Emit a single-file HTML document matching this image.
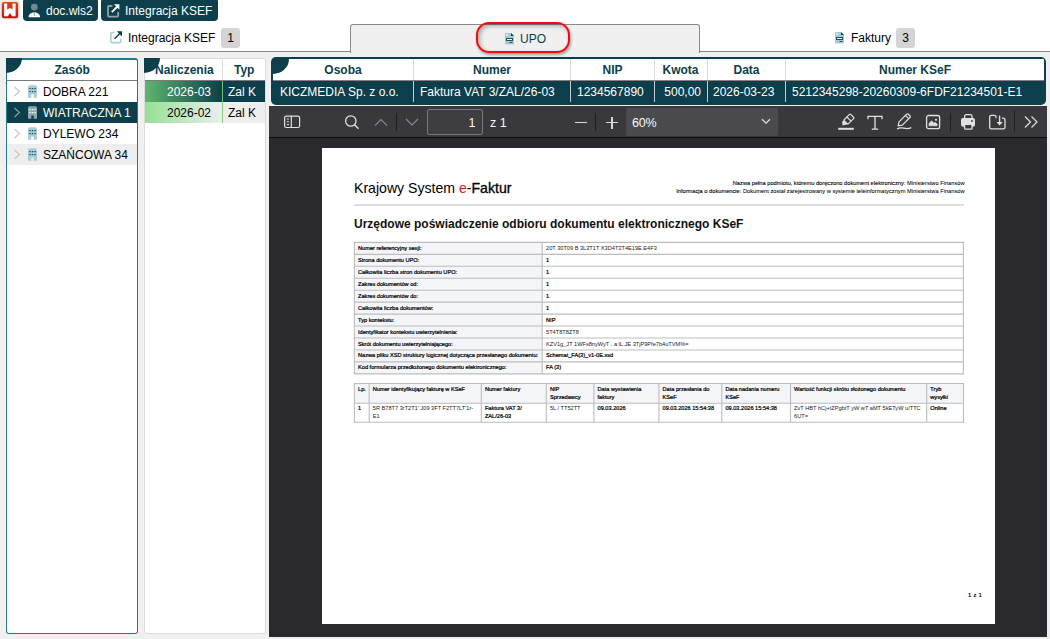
<!DOCTYPE html>
<html><head><meta charset="utf-8">
<style>
*{box-sizing:border-box;margin:0;padding:0}
html,body{width:1050px;height:639px;overflow:hidden}
body{position:relative;background:#f0f0f0;font-family:"Liberation Sans",sans-serif;font-size:12px;color:#000}
.abs{position:absolute}
#top{position:absolute;left:0;top:0;width:1050px;height:52px;background:#fff}
.btn{position:absolute;top:-2px;height:23px;background:#0c3f4b;border-radius:4px;color:#fff;font-size:12px;line-height:25px}
.tabline{position:absolute;top:51px;height:1px;background:#888}
.tab{position:absolute;top:24px;height:29px;background:#f0f0f0;border:1px solid #888;border-bottom:none;border-radius:3px 3px 0 0;width:350px;left:350px}
.badge{position:absolute;top:28px;width:19px;height:20px;background:#d4d4d4;border-radius:3px;text-align:center;line-height:20px;font-size:12px;color:#000}
.panel{position:absolute;background:#fff}
.qc{position:absolute;width:16px;height:15px;background:#0c3f4b;border-bottom-right-radius:16px 15px}
.hdr{position:absolute;font-weight:bold;color:#0c3f4b;font-size:12px}
</style></head><body>
<div id="top">
  <!-- logo -->
  <div class="abs" style="left:0;top:0;width:20px;height:20px;border-radius:3px;background:#e6ecef"></div>
  <svg class="abs" style="left:0;top:0" width="20" height="20" viewBox="0 0 20 20"><defs><linearGradient id="lg" x1="0" y1="0" x2="0" y2="1"><stop offset="0" stop-color="#e2470f"/><stop offset="1" stop-color="#c80f0a"/></linearGradient></defs><rect x="1.8" y="1.9" width="16.4" height="16.3" rx="2.2" fill="url(#lg)"/><path d="M4.1 3.4H7.2V9.5L10 8L12.5 9.5V3.4H15.6V16.3H12.1L10 13.1L7.9 16.3H4.1Z" fill="#fff"/></svg>
  <div class="btn" style="left:23px;width:75px"></div>
  <div class="btn" style="left:101px;width:117px"></div>
  <svg class="abs" style="left:106px;top:3px" width="15" height="15" viewBox="0 0 15 15"><path d="M6.5 3H3Q2 3 2 4V12.6Q2 13.6 3 13.6H11.2Q12.2 13.6 12.2 12.6V9" fill="none" stroke="#8ea3a8" stroke-width="1.8"/><path d="M5.8 9.2L12 3" stroke="#fff" stroke-width="1.9"/><path d="M8 1.3H13.4V6.7Z" fill="#fff"/></svg>
<svg class="abs" style="left:27px;top:2px" width="15" height="17" viewBox="0 0 15 17"><circle cx="7.3" cy="5.1" r="3.4" fill="#6f8a90"/><path d="M1.5 15.2Q1.8 10.6 7.3 10.3Q12.8 10.6 13.1 15.2Z" fill="#fff"/><path d="M7.3 10.5V14" stroke="#6f8a90" stroke-width="0.8"/></svg>
<div class="abs" style="left:46px;top:3px;color:#fff;line-height:16px">doc.wls2</div>
  <div class="abs" style="left:125px;top:3px;color:#fff;line-height:16px">Integracja KSEF</div>
  <div class="tabline" style="left:0;width:351px"></div>
  <div class="tabline" style="left:699px;width:351px"></div>
  <div class="tab"></div>
  <svg class="abs" style="left:109px;top:30px" width="15" height="15" viewBox="0 0 15 15"><path d="M5.5 2.5H2.8Q1.8 2.5 1.8 3.5V11.6Q1.8 12.6 2.8 12.6H10.8Q11.8 12.6 11.8 11.6V8.8" fill="none" stroke="#a6d0dc" stroke-width="1.6"/><path d="M5.6 8.8L11.6 2.8" stroke="#0c3f4b" stroke-width="1.35"/><path d="M7.8 1.2H13V6.4Z" fill="#0c3f4b"/></svg>
<div class="abs" style="left:128px;top:30px;line-height:16px">Integracja KSEF</div>
  <div class="badge" style="left:221px">1</div>
  <div class="abs" style="left:476px;top:22px;width:94px;height:31px;border:2px solid #f40a0a;border-radius:13px;box-shadow:1px 2px 3px rgba(0,0,0,.35), inset 2px 2px 4px rgba(0,0,0,.3)"></div>
<svg class="abs" style="left:505px;top:33px" width="10" height="12" viewBox="0 0 10 12"><path d="M0 0H6L9 3V11.5H0Z" fill="#a3ccd5"/><path d="M6 0V3H9Z" fill="#123f4c"/><rect x="1" y="1" width="2" height="2" fill="#d6ecf0"/><rect x="1" y="5" width="7" height="3" fill="#1f4f5e"/><rect x="2" y="6" width="5" height="1" fill="#fff"/><rect x="4.5" y="9" width="3" height="1" fill="#1f4f5e"/></svg>
<div class="abs" style="left:520px;top:31px;line-height:16px;color:#0c3f4b">UPO</div>
  <svg class="abs" style="left:835px;top:32px" width="10" height="12" viewBox="0 0 10 12"><path d="M0 0H6L9 3V11.5H0Z" fill="#a3ccd5"/><path d="M6 0V3H9Z" fill="#123f4c"/><rect x="1" y="1" width="2" height="2" fill="#d6ecf0"/><rect x="1" y="5" width="7" height="3" fill="#1f4f5e"/><rect x="2" y="6" width="5" height="1" fill="#fff"/><rect x="4.5" y="9" width="3" height="1" fill="#1f4f5e"/></svg>
<div class="abs" style="left:851px;top:30px;line-height:16px">Faktury</div>
  <div class="badge" style="left:896px">3</div>
</div>

<!-- left panel -->
<div class="panel" style="left:6px;top:58px;width:132px;height:576px;border:1px solid #1d7c8a;border-top-width:2px;border-radius:3px"></div>
<div class="qc" style="left:6px;top:58px"></div>
<div class="hdr" style="left:54.5px;top:63px">Zasób</div>
<div class="abs" style="left:7px;top:80px;width:130px;height:1px;background:#7a7a7a"></div>
<div class="abs" style="left:7px;top:102px;width:130px;height:21px;background:#0c3f4b"></div>
<div class="abs" style="left:7px;top:144px;width:130px;height:21px;background:#eeeeee"></div>
<svg class="abs" style="left:13px;top:86px" width="8" height="11" viewBox="0 0 8 11"><path d="M1.5 1L6.5 5.5L1.5 10" fill="none" stroke="#c4c4c4" stroke-width="1.1"/></svg>
<svg class="abs" style="left:28px;top:85px" width="9" height="13" viewBox="0 0 9 13"><path d="M0 2Q0 0.3 1.7 0.3H7.3Q9 0.3 9 2V12.8H0Z" fill="#a8cdd6"/><rect x="3.3" y="9.5" width="2.4" height="3.3" fill="#ffffff"/><g fill="#1f4f5e"><rect x="1.3" y="3" width="1.4" height="1.2"/><rect x="3.8" y="3" width="1.4" height="1.2"/><rect x="6.3" y="3" width="1.4" height="1.2"/><rect x="1.3" y="6" width="1.4" height="1.2"/><rect x="3.8" y="6" width="1.4" height="1.2"/><rect x="6.3" y="6" width="1.4" height="1.2"/></g></svg>
<div class="abs" style="left:43px;top:85px;line-height:14px;color:#000">DOBRA 221</div>
<svg class="abs" style="left:13px;top:107px" width="8" height="11" viewBox="0 0 8 11"><path d="M1.5 1L6.5 5.5L1.5 10" fill="none" stroke="#8fa3a8" stroke-width="1.1"/></svg>
<svg class="abs" style="left:28px;top:106px" width="9" height="13" viewBox="0 0 9 13"><path d="M0 2Q0 0.3 1.7 0.3H7.3Q9 0.3 9 2V12.8H0Z" fill="#8da8ad"/><rect x="3.3" y="9.5" width="2.4" height="3.3" fill="#0c3f4b"/><g fill="#ffffff"><rect x="1.3" y="3" width="1.4" height="1.2"/><rect x="3.8" y="3" width="1.4" height="1.2"/><rect x="6.3" y="3" width="1.4" height="1.2"/><rect x="1.3" y="6" width="1.4" height="1.2"/><rect x="3.8" y="6" width="1.4" height="1.2"/><rect x="6.3" y="6" width="1.4" height="1.2"/></g></svg>
<div class="abs" style="left:43px;top:106px;line-height:14px;color:#fff">WIATRACZNA 1</div>
<svg class="abs" style="left:13px;top:128px" width="8" height="11" viewBox="0 0 8 11"><path d="M1.5 1L6.5 5.5L1.5 10" fill="none" stroke="#c4c4c4" stroke-width="1.1"/></svg>
<svg class="abs" style="left:28px;top:127px" width="9" height="13" viewBox="0 0 9 13"><path d="M0 2Q0 0.3 1.7 0.3H7.3Q9 0.3 9 2V12.8H0Z" fill="#a8cdd6"/><rect x="3.3" y="9.5" width="2.4" height="3.3" fill="#ffffff"/><g fill="#1f4f5e"><rect x="1.3" y="3" width="1.4" height="1.2"/><rect x="3.8" y="3" width="1.4" height="1.2"/><rect x="6.3" y="3" width="1.4" height="1.2"/><rect x="1.3" y="6" width="1.4" height="1.2"/><rect x="3.8" y="6" width="1.4" height="1.2"/><rect x="6.3" y="6" width="1.4" height="1.2"/></g></svg>
<div class="abs" style="left:43px;top:127px;line-height:14px;color:#000">DYLEWO 234</div>
<svg class="abs" style="left:13px;top:149px" width="8" height="11" viewBox="0 0 8 11"><path d="M1.5 1L6.5 5.5L1.5 10" fill="none" stroke="#c4c4c4" stroke-width="1.1"/></svg>
<svg class="abs" style="left:28px;top:148px" width="9" height="13" viewBox="0 0 9 13"><path d="M0 2Q0 0.3 1.7 0.3H7.3Q9 0.3 9 2V12.8H0Z" fill="#a8cdd6"/><rect x="3.3" y="9.5" width="2.4" height="3.3" fill="#eeeeee"/><g fill="#1f4f5e"><rect x="1.3" y="3" width="1.4" height="1.2"/><rect x="3.8" y="3" width="1.4" height="1.2"/><rect x="6.3" y="3" width="1.4" height="1.2"/><rect x="1.3" y="6" width="1.4" height="1.2"/><rect x="3.8" y="6" width="1.4" height="1.2"/><rect x="6.3" y="6" width="1.4" height="1.2"/></g></svg>
<div class="abs" style="left:43px;top:148px;line-height:14px;color:#000">SZAŃCOWA 34</div>


<!-- middle panel -->
<div class="panel" style="left:144px;top:58px;width:122px;height:576px;border:1px solid #dcdcdc;border-radius:3px"></div>

<div class="abs" style="left:145px;top:80px;width:120px;height:1px;background:#7a7a7a"></div>
<div class="abs" style="left:222px;top:59px;width:1px;height:21px;background:#dcdcdc"></div>
<div class="abs" style="left:145px;top:81px;width:77px;height:21px;background:linear-gradient(90deg,#5fb56e,#0c3f4b)"></div>
<div class="abs" style="left:222px;top:81px;width:1px;height:21px;background:#6cc46c"></div>
<div class="abs" style="left:223px;top:81px;width:42px;height:21px;background:#0c3f4b"></div>
<div class="abs" style="left:145px;top:102px;width:77px;height:21px;background:linear-gradient(90deg,#94e094,#eeeeee)"></div>
<div class="abs" style="left:222px;top:102px;width:1px;height:21px;background:#7fd07f"></div>
<div class="abs" style="left:223px;top:102px;width:42px;height:21px;background:#eeeeee"></div>
<div class="qc" style="left:144px;top:58px"></div>
<div class="hdr" style="left:155px;top:63px">Naliczenia</div>
<div class="hdr" style="left:234px;top:63px">Typ</div>
<div class="abs" style="left:145px;top:85px;width:66px;text-align:right;line-height:14px;color:#fff">2026-03</div>
<div class="abs" style="left:228px;top:85px;line-height:14px;color:#fff">Zal K</div>
<div class="abs" style="left:145px;top:106px;width:66px;text-align:right;line-height:14px">2026-02</div>
<div class="abs" style="left:228px;top:106px;line-height:14px">Zal K</div>


<!-- table -->
<div class="abs" style="left:271px;top:57px;width:775px;height:48px;background:#0c3f4b;border-radius:5px"></div>
<div class="abs" style="left:273px;top:59px;width:771px;height:21px;background:#fff"></div>
<div class="qc" style="left:273px;top:59px"></div>
<div class="abs" style="left:273px;top:80px;width:771px;height:1px;background:#8a8080"></div>
<div class="abs" style="left:413px;top:59px;width:1px;height:21px;background:#dadada"></div>
<div class="abs" style="left:413px;top:81px;width:1px;height:21px;background:#c8cccc"></div>
<div class="abs" style="left:570px;top:59px;width:1px;height:21px;background:#dadada"></div>
<div class="abs" style="left:570px;top:81px;width:1px;height:21px;background:#c8cccc"></div>
<div class="abs" style="left:654px;top:59px;width:1px;height:21px;background:#dadada"></div>
<div class="abs" style="left:654px;top:81px;width:1px;height:21px;background:#c8cccc"></div>
<div class="abs" style="left:707px;top:59px;width:1px;height:21px;background:#dadada"></div>
<div class="abs" style="left:707px;top:81px;width:1px;height:21px;background:#c8cccc"></div>
<div class="abs" style="left:785px;top:59px;width:1px;height:21px;background:#dadada"></div>
<div class="abs" style="left:785px;top:81px;width:1px;height:21px;background:#c8cccc"></div>
<div class="hdr" style="left:273px;width:140px;text-align:center;top:63px">Osoba</div>
<div class="hdr" style="left:413px;width:158px;text-align:center;top:63px">Numer</div>
<div class="hdr" style="left:571px;width:83px;text-align:center;top:63px">NIP</div>
<div class="hdr" style="left:654px;width:53px;text-align:center;top:63px">Kwota</div>
<div class="hdr" style="left:707px;width:79px;text-align:center;top:63px">Data</div>
<div class="hdr" style="left:786px;width:258px;text-align:center;top:63px">Numer KSeF</div>
<div class="abs" style="left:280px;top:85px;line-height:14px;color:#fff">KICZMEDIA Sp. z o.o.</div>
<div class="abs" style="left:420px;top:85px;line-height:14px;color:#fff">Faktura VAT 3/ZAL/26-03</div>
<div class="abs" style="left:577px;top:85px;line-height:14px;color:#fff">1234567890</div>
<div class="abs" style="left:654px;width:47px;text-align:right;top:85px;line-height:14px;color:#fff">500,00</div>
<div class="abs" style="left:713px;top:85px;line-height:14px;color:#fff">2026-03-23</div>
<div class="abs" style="left:792px;top:85px;line-height:14px;color:#fff">5212345298-20260309-6FDF21234501-E1</div>


<!-- viewer -->
<div class="abs" style="left:269px;top:106px;width:778px;height:531px;background:#2a2a2e"></div>
<div class="abs" style="left:269px;top:106px;width:778px;height:32px;background:#38383d;border-bottom:1px solid #0c0c0d"></div>
<div class="abs" style="left:322px;top:148px;width:673px;height:476px;background:#fff"></div>

<div class="abs" style="left:354px;top:180px;font-size:14.1px;line-height:16px;color:#000;white-space:nowrap">Krajowy System <span style="color:#e8141c">e</span>-<span style="-webkit-text-stroke:0.3px #000">Faktur</span></div>
<div class="abs" style="left:600px;width:364.5px;top:180px;font-size:5.7px;line-height:7.6px;text-align:right;color:#000;-webkit-text-stroke:0.05px #000;white-space:nowrap"><span style="-webkit-text-stroke:0.1px #000">Nazwa pełna podmiotu, któremu doręczono dokument elektroniczny:</span> Ministerstwo Finansów<br><span style="-webkit-text-stroke:0.1px #000">Informacja o dokumencie:</span> Dokument został zarejestrowany w systemie teleinformatycznym Ministerstwa Finansów</div>
<div class="abs" style="left:354px;top:217px;font-size:12px;line-height:14px;font-weight:bold;color:#111;white-space:nowrap">Urzędowe poświadczenie odbioru dokumentu elektronicznego KSeF</div>
<svg class="abs" style="left:0;top:0" width="1050" height="639" viewBox="0 0 1050 639"><line x1="354" y1="205" x2="964" y2="205" stroke="#d2d2d2" stroke-width="1.6"/><rect x="354.4" y="242.4" width="187.8" height="131.45" fill="#f4f5f9"/><line x1="353.9" y1="242.40" x2="963.9" y2="242.40" stroke="#bdbdbd" stroke-width="1.1"/><line x1="353.9" y1="254.35" x2="963.9" y2="254.35" stroke="#bdbdbd" stroke-width="1.1"/><line x1="353.9" y1="266.30" x2="963.9" y2="266.30" stroke="#bdbdbd" stroke-width="1.1"/><line x1="353.9" y1="278.25" x2="963.9" y2="278.25" stroke="#bdbdbd" stroke-width="1.1"/><line x1="353.9" y1="290.20" x2="963.9" y2="290.20" stroke="#bdbdbd" stroke-width="1.1"/><line x1="353.9" y1="302.15" x2="963.9" y2="302.15" stroke="#bdbdbd" stroke-width="1.1"/><line x1="353.9" y1="314.10" x2="963.9" y2="314.10" stroke="#bdbdbd" stroke-width="1.1"/><line x1="353.9" y1="326.05" x2="963.9" y2="326.05" stroke="#bdbdbd" stroke-width="1.1"/><line x1="353.9" y1="338.00" x2="963.9" y2="338.00" stroke="#bdbdbd" stroke-width="1.1"/><line x1="353.9" y1="349.95" x2="963.9" y2="349.95" stroke="#bdbdbd" stroke-width="1.1"/><line x1="353.9" y1="361.90" x2="963.9" y2="361.90" stroke="#bdbdbd" stroke-width="1.1"/><line x1="353.9" y1="373.85" x2="963.9" y2="373.85" stroke="#bdbdbd" stroke-width="1.1"/><line x1="354.4" y1="242.4" x2="354.4" y2="373.85" stroke="#bdbdbd" stroke-width="1.1"/><line x1="542.2" y1="242.4" x2="542.2" y2="373.85" stroke="#bdbdbd" stroke-width="1.1"/><line x1="963.4" y1="242.4" x2="963.4" y2="373.85" stroke="#bdbdbd" stroke-width="1.1"/><rect x="354.4" y="383.5" width="609.1" height="19.7" fill="#f4f5f9"/><line x1="353.9" y1="383.5" x2="964" y2="383.5" stroke="#bdbdbd" stroke-width="1.1"/><line x1="353.9" y1="403.2" x2="964" y2="403.2" stroke="#bdbdbd" stroke-width="1.1"/><line x1="353.9" y1="422.3" x2="964" y2="422.3" stroke="#bdbdbd" stroke-width="1.1"/><line x1="354.4" y1="383.5" x2="354.4" y2="422.3" stroke="#bdbdbd" stroke-width="1.1"/><line x1="369.2" y1="383.5" x2="369.2" y2="422.3" stroke="#bdbdbd" stroke-width="1.1"/><line x1="481.3" y1="383.5" x2="481.3" y2="422.3" stroke="#bdbdbd" stroke-width="1.1"/><line x1="546.3" y1="383.5" x2="546.3" y2="422.3" stroke="#bdbdbd" stroke-width="1.1"/><line x1="593.9" y1="383.5" x2="593.9" y2="422.3" stroke="#bdbdbd" stroke-width="1.1"/><line x1="658.9" y1="383.5" x2="658.9" y2="422.3" stroke="#bdbdbd" stroke-width="1.1"/><line x1="721.8" y1="383.5" x2="721.8" y2="422.3" stroke="#bdbdbd" stroke-width="1.1"/><line x1="790.5" y1="383.5" x2="790.5" y2="422.3" stroke="#bdbdbd" stroke-width="1.1"/><line x1="926.7" y1="383.5" x2="926.7" y2="422.3" stroke="#bdbdbd" stroke-width="1.1"/><line x1="963.5" y1="383.5" x2="963.5" y2="422.3" stroke="#bdbdbd" stroke-width="1.1"/></svg>
<div class="abs" style="left:358px;top:243.90px;font-size:5.63px;line-height:8px;-webkit-text-stroke:0.22px #000;color:#000;white-space:nowrap">Numer referencyjny sesji:</div>
<div class="abs" style="left:546px;top:243.90px;font-size:5.63px;line-height:8px;color:#222;white-space:nowrap">20T 30T09  B 3L3T1T X3D4T3T4E19E.E4F3</div>
<div class="abs" style="left:358px;top:255.85px;font-size:5.63px;line-height:8px;-webkit-text-stroke:0.22px #000;color:#000;white-space:nowrap">Strona dokumentu UPO:</div>
<div class="abs" style="left:546px;top:255.85px;font-size:5.63px;line-height:8px;-webkit-text-stroke:0.22px #000;color:#000;white-space:nowrap">1</div>
<div class="abs" style="left:358px;top:267.80px;font-size:5.63px;line-height:8px;-webkit-text-stroke:0.22px #000;color:#000;white-space:nowrap">Całkowita liczba stron dokumentu UPO:</div>
<div class="abs" style="left:546px;top:267.80px;font-size:5.63px;line-height:8px;-webkit-text-stroke:0.22px #000;color:#000;white-space:nowrap">1</div>
<div class="abs" style="left:358px;top:279.75px;font-size:5.63px;line-height:8px;-webkit-text-stroke:0.22px #000;color:#000;white-space:nowrap">Zakres dokumentów od:</div>
<div class="abs" style="left:546px;top:279.75px;font-size:5.63px;line-height:8px;-webkit-text-stroke:0.22px #000;color:#000;white-space:nowrap">1</div>
<div class="abs" style="left:358px;top:291.70px;font-size:5.63px;line-height:8px;-webkit-text-stroke:0.22px #000;color:#000;white-space:nowrap">Zakres dokumentów do:</div>
<div class="abs" style="left:546px;top:291.70px;font-size:5.63px;line-height:8px;-webkit-text-stroke:0.22px #000;color:#000;white-space:nowrap">1</div>
<div class="abs" style="left:358px;top:303.65px;font-size:5.63px;line-height:8px;-webkit-text-stroke:0.22px #000;color:#000;white-space:nowrap">Całkowita liczba dokumentów:</div>
<div class="abs" style="left:546px;top:303.65px;font-size:5.63px;line-height:8px;-webkit-text-stroke:0.22px #000;color:#000;white-space:nowrap">1</div>
<div class="abs" style="left:358px;top:315.60px;font-size:5.63px;line-height:8px;-webkit-text-stroke:0.22px #000;color:#000;white-space:nowrap">Typ kontekstu:</div>
<div class="abs" style="left:546px;top:315.60px;font-size:5.63px;line-height:8px;-webkit-text-stroke:0.22px #000;color:#000;white-space:nowrap">NIP</div>
<div class="abs" style="left:358px;top:327.55px;font-size:5.63px;line-height:8px;-webkit-text-stroke:0.22px #000;color:#000;white-space:nowrap">Identyfikator kontekstu uwierzytelnienia:</div>
<div class="abs" style="left:546px;top:327.55px;font-size:5.63px;line-height:8px;color:#222;white-space:nowrap">5T4T8T8ZT8</div>
<div class="abs" style="left:358px;top:339.50px;font-size:5.63px;line-height:8px;-webkit-text-stroke:0.22px #000;color:#000;white-space:nowrap">Skrót dokumentu uwierzytelniającego:</div>
<div class="abs" style="left:546px;top:339.50px;font-size:5.63px;line-height:8px;color:#222;white-space:nowrap">KZV1g_JT 1WFs8nyWyT . a lL.JE 3TjP9Pfe7b4uTVM%=</div>
<div class="abs" style="left:358px;top:351.45px;font-size:5.63px;line-height:8px;-webkit-text-stroke:0.22px #000;color:#000;white-space:nowrap">Nazwa pliku XSD struktury logicznej dotycząca przesłanego dokumentu:</div>
<div class="abs" style="left:546px;top:351.45px;font-size:5.63px;line-height:8px;-webkit-text-stroke:0.22px #000;color:#000;white-space:nowrap">Schemat_FA(3)_v1-0E.xsd</div>
<div class="abs" style="left:358px;top:363.40px;font-size:5.63px;line-height:8px;-webkit-text-stroke:0.22px #000;color:#000;white-space:nowrap">Kod formularza przedłożonego dokumentu elektronicznego:</div>
<div class="abs" style="left:546px;top:363.40px;font-size:5.63px;line-height:8px;-webkit-text-stroke:0.22px #000;color:#000;white-space:nowrap">FA (3)</div>
<div class="abs" style="left:358.0px;top:385.8px;font-size:5.63px;line-height:7.7px;-webkit-text-stroke:0.22px #000;color:#000;white-space:nowrap">Lp.</div>
<div class="abs" style="left:358.0px;top:404.8px;font-size:5.63px;line-height:7.7px;-webkit-text-stroke:0.22px #000;color:#000;white-space:nowrap">1</div>
<div class="abs" style="left:372.8px;top:385.8px;font-size:5.63px;line-height:7.7px;-webkit-text-stroke:0.22px #000;color:#000;white-space:nowrap">Numer identyfikujący fakturę w KSeF</div>
<div class="abs" style="left:372.8px;top:404.8px;font-size:5.63px;line-height:7.7px;color:#222;white-space:nowrap">5R   B78T7 3rT2T1' J09 3FT F2TT7LT'1r-<br>E1</div>
<div class="abs" style="left:484.9px;top:385.8px;font-size:5.63px;line-height:7.7px;-webkit-text-stroke:0.22px #000;color:#000;white-space:nowrap">Numer faktury</div>
<div class="abs" style="left:484.9px;top:404.8px;font-size:5.63px;line-height:7.7px;-webkit-text-stroke:0.22px #000;color:#000;white-space:nowrap">Faktura VAT 3/<br>ZAL/26-03</div>
<div class="abs" style="left:549.9px;top:385.8px;font-size:5.63px;line-height:7.7px;-webkit-text-stroke:0.22px #000;color:#000;white-space:nowrap">NIP<br>Sprzedawcy</div>
<div class="abs" style="left:549.9px;top:404.8px;font-size:5.63px;line-height:7.7px;color:#222;white-space:nowrap">5L / TT52TT</div>
<div class="abs" style="left:597.5px;top:385.8px;font-size:5.63px;line-height:7.7px;-webkit-text-stroke:0.22px #000;color:#000;white-space:nowrap">Data wystawienia<br>faktury</div>
<div class="abs" style="left:597.5px;top:404.8px;font-size:5.63px;line-height:7.7px;-webkit-text-stroke:0.22px #000;color:#000;white-space:nowrap">09.03.2026</div>
<div class="abs" style="left:662.5px;top:385.8px;font-size:5.63px;line-height:7.7px;-webkit-text-stroke:0.22px #000;color:#000;white-space:nowrap">Data przesłania do<br>KSeF</div>
<div class="abs" style="left:662.5px;top:404.8px;font-size:5.63px;line-height:7.7px;-webkit-text-stroke:0.22px #000;color:#000;white-space:nowrap">09.03.2026 15:54:38</div>
<div class="abs" style="left:725.4px;top:385.8px;font-size:5.63px;line-height:7.7px;-webkit-text-stroke:0.22px #000;color:#000;white-space:nowrap">Data nadania numeru<br>KSeF</div>
<div class="abs" style="left:725.4px;top:404.8px;font-size:5.63px;line-height:7.7px;-webkit-text-stroke:0.22px #000;color:#000;white-space:nowrap">09.03.2026 15:54:38</div>
<div class="abs" style="left:794.1px;top:385.8px;font-size:5.63px;line-height:7.7px;-webkit-text-stroke:0.22px #000;color:#000;white-space:nowrap">Wartość funkcji skrótu złożonego dokumentu</div>
<div class="abs" style="left:794.1px;top:404.8px;font-size:5.63px;line-height:7.7px;color:#222;white-space:nowrap">ZvT HBT hCj+tZPgbtT yW wT aMT 5kETyW u/TTC<br>6UT=</div>
<div class="abs" style="left:930.3px;top:385.8px;font-size:5.63px;line-height:7.7px;-webkit-text-stroke:0.22px #000;color:#000;white-space:nowrap">Tryb<br>wysyłki</div>
<div class="abs" style="left:930.3px;top:404.8px;font-size:5.63px;line-height:7.7px;-webkit-text-stroke:0.22px #000;color:#000;white-space:nowrap">Online</div>
<div class="abs" style="left:968px;top:590.5px;font-size:5.8px;letter-spacing:0.3px;line-height:8px;font-weight:bold;color:#000">1 z 1</div>
<!-- toolbar icons -->
<svg class="abs" style="left:283px;top:115px" width="18" height="14" viewBox="0 0 18 14"><rect x="1.6" y="1.1" width="15" height="11.4" rx="1.8" fill="none" stroke="#e0e0e4" stroke-width="1.2"/><path d="M8.3 1.1V12.5" stroke="#e0e0e4" stroke-width="1.2"/><path d="M3.8 4H6M3.8 6.8H6M3.8 9.6H6" stroke="#e0e0e4" stroke-width="1"/></svg>
<svg class="abs" style="left:343px;top:113px" width="18" height="18" viewBox="0 0 18 18"><circle cx="7.8" cy="8" r="5.2" fill="none" stroke="#e0e0e4" stroke-width="1.3"/><path d="M11.5 11.8L15.5 15.8" stroke="#e0e0e4" stroke-width="1.4"/></svg>
<svg class="abs" style="left:374px;top:116px" width="14" height="12" viewBox="0 0 14 12"><path d="M1 9.7L7 3.6L13 9.7" fill="none" stroke="#8a8a90" stroke-width="1.1"/></svg>
<div class="abs" style="left:396px;top:113px;width:1px;height:18px;background:#1f1f22"></div>
<svg class="abs" style="left:405px;top:116px" width="14" height="12" viewBox="0 0 14 12"><path d="M1 3L7 9L13 3" fill="none" stroke="#8a8a90" stroke-width="1.1"/></svg>
<div class="abs" style="left:427px;top:109px;width:56px;height:26px;border:1px solid #77777c;border-radius:2px;background:#3d3d42"></div>
<div class="abs" style="left:427px;top:116px;width:48.5px;text-align:right;color:#fbfbfe;font-size:12.5px;line-height:15px">1</div>
<div class="abs" style="left:490px;top:116px;color:#fbfbfe;font-size:12.5px;line-height:15px">z 1</div>
<div class="abs" style="left:575px;top:122px;width:12px;height:1.2px;background:#d8d8dc"></div>
<div class="abs" style="left:595px;top:113px;width:1px;height:18px;background:#1f1f22"></div>
<div class="abs" style="left:606px;top:122px;width:12px;height:1.2px;background:#d8d8dc"></div>
<div class="abs" style="left:611.4px;top:117px;width:1.2px;height:12px;background:#d8d8dc"></div>
<div class="abs" style="left:626px;top:108px;width:152px;height:28px;background:#4a4a4f;border-radius:2px"></div>
<div class="abs" style="left:632px;top:116px;color:#fbfbfe;font-size:12.5px;letter-spacing:-0.25px;line-height:15px">60%</div>
<svg class="abs" style="left:761px;top:118px" width="10" height="7" viewBox="0 0 10 7"><path d="M1 1.2L5 5.2L9 1.2" fill="none" stroke="#e0e0e4" stroke-width="1.3"/></svg>
<svg class="abs" style="left:836px;top:113px" width="20" height="18" viewBox="0 0 20 18"><g transform="translate(12.6 6.4) rotate(45)"><rect x="-2.9" y="-5" width="5.8" height="9" rx="0.9" fill="none" stroke="#e0e0e4" stroke-width="1.2"/><path d="M-2.9 -0.5H2.9" stroke="#e0e0e4" stroke-width="1.1"/><path d="M-2.9 4V6.2L0 8.6L2.9 4Z" fill="#e0e0e4"/></g><path d="M2.2 15.8H17.8" stroke="#e0e0e4" stroke-width="2"/></svg>
<svg class="abs" style="left:866px;top:115px" width="18" height="16" viewBox="0 0 18 16"><path d="M2 4.2V1.3H16V4.2M2 1.3V4.2M9 1.3V14.2M5.8 14.2H12.2" fill="none" stroke="#e0e0e4" stroke-width="1.3"/></svg>
<svg class="abs" style="left:895px;top:113px" width="18" height="18" viewBox="0 0 18 18"><g transform="translate(8.8 7.3) rotate(45)"><path d="M-2.3 4.5V-6.3Q-2.3 -7.5 -1.1 -7.5H1.1Q2.3 -7.5 2.3 -6.3V4.5L0 8Z" fill="none" stroke="#e0e0e4" stroke-width="1.2" stroke-linejoin="round"/><path d="M-2.3 -4.6H2.3" stroke="#e0e0e4" stroke-width="1.1"/></g><path d="M2 15.9Q5 14.2 9 15.2T16.3 14.6" fill="none" stroke="#e0e0e4" stroke-width="1.2"/></svg>
<svg class="abs" style="left:924px;top:113px" width="18" height="18" viewBox="0 0 18 18"><rect x="2.6" y="2.5" width="13" height="13.2" rx="2" fill="none" stroke="#e0e0e4" stroke-width="1.3"/><path d="M5 12.8V10.5L7.6 7.8L10 10.2L11 9.3L13.2 11V12.8Z" fill="#e0e0e4" stroke="#e0e0e4" stroke-width="0.6" stroke-linejoin="round"/><circle cx="12" cy="6.8" r="1.1" fill="#e0e0e4"/></svg>
<div class="abs" style="left:950px;top:113px;width:1px;height:19px;background:#1f1f22"></div>
<svg class="abs" style="left:959px;top:113px" width="18" height="18" viewBox="0 0 18 18"><rect x="5.6" y="1.7" width="7.4" height="5.5" rx="1.6" fill="none" stroke="#e0e0e4" stroke-width="1.3"/><rect x="2" y="5" width="14" height="8.8" rx="2" fill="#e0e0e4"/><circle cx="13" cy="8" r="0.9" fill="#38383d"/><rect x="5.6" y="11.3" width="7.4" height="4.9" rx="1" fill="#38383d" stroke="#e0e0e4" stroke-width="1.3"/></svg>
<svg class="abs" style="left:987px;top:113px" width="20" height="18" viewBox="0 0 20 18"><path d="M9 5.2V3.8Q9 2.4 7.6 2.4H4.4Q2.7 2.4 2.7 4.1V14.2Q2.7 15.8 4.3 15.8H16.4Q18 15.8 18 14.2V6.9Q18 5.2 16.3 5.2H15" fill="none" stroke="#e0e0e4" stroke-width="1.3"/><path d="M12.6 2.6V10" stroke="#e0e0e4" stroke-width="1.4"/><path d="M9.5 9H15.7L12.6 12.4Z" fill="#e0e0e4"/></svg>
<div class="abs" style="left:1014px;top:111px;width:1px;height:21px;background:#1f1f22"></div>
<svg class="abs" style="left:1023px;top:114px" width="17" height="16" viewBox="0 0 17 16"><path d="M2 2.5L7.5 8L2 13.5M8.5 2.5L14 8L8.5 13.5" fill="none" stroke="#e0e0e4" stroke-width="1.2"/></svg>
</body></html>
